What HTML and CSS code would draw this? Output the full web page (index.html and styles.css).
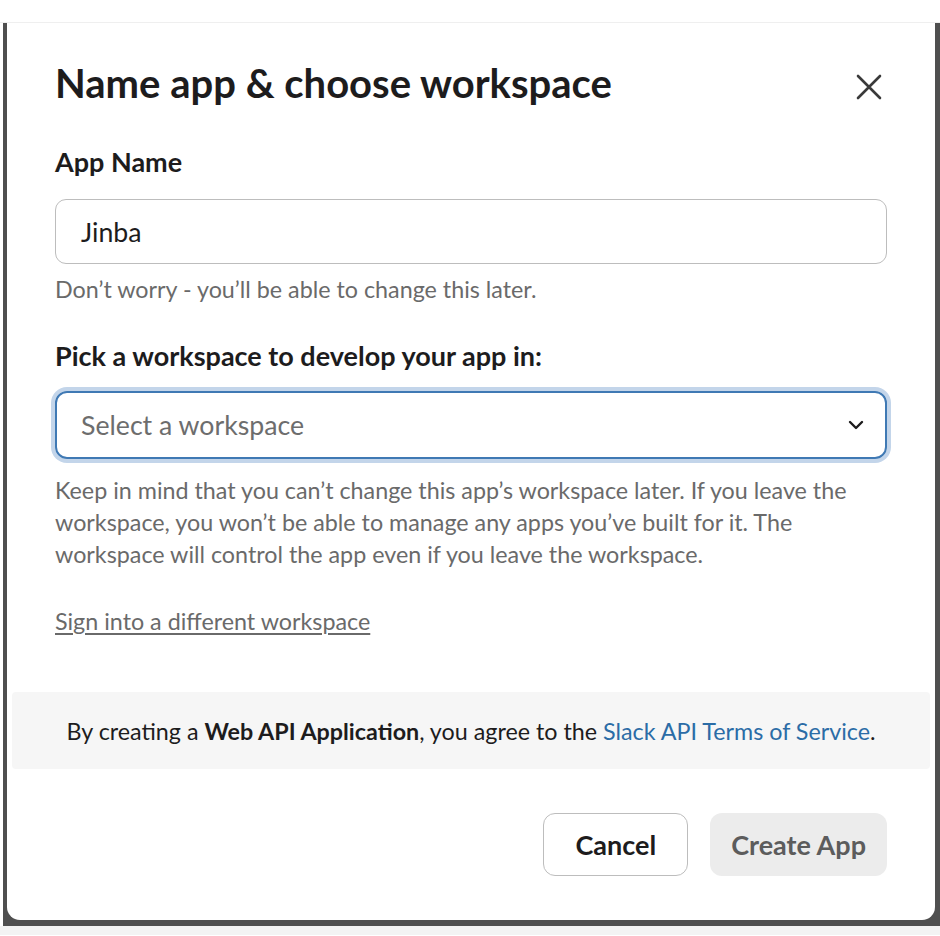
FILE: index.html
```html
<!DOCTYPE html>
<html lang="en">
<head>
<meta charset="utf-8">
<title>Name app &amp; choose workspace</title>
<link rel="stylesheet" href="styles.css">
</head>
<body>
<div class="top-strip"></div>
<div class="backdrop">
  <div class="dialog">
    <div class="content">
      <div class="title-row">
        <h1 class="title">Name app &amp; choose workspace</h1>
        <button class="close" aria-label="Close">
          <svg width="26" height="26" viewBox="0 0 26 26"><path d="M2 2 L24 24 M24 2 L2 24" stroke="#3a3a3a" stroke-width="2.6" stroke-linecap="round" fill="none"/></svg>
        </button>
      </div>
      <label class="label label-first">App Name</label>
      <div class="input">Jinba</div>
      <p class="hint">Don’t worry - you’ll be able to change this later.</p>
      <label class="label label-second">Pick a workspace to develop your app in:</label>
      <div class="select">
        <span class="placeholder">Select a workspace</span>
        <svg class="chevron" width="16" height="10" viewBox="0 0 16 10"><path d="M2 2 L8 8 L14 2" stroke="#1d1c1d" stroke-width="2.4" stroke-linecap="round" stroke-linejoin="round" fill="none"/></svg>
      </div>
      <p class="note">Keep in mind that you can’t change this app’s workspace later. If you leave the workspace, you won’t be able to manage any apps you’ve built for it. The workspace will control the app even if you leave the workspace.</p>
      <a class="signin" href="#">Sign into a different workspace</a>
    </div>
    <div class="band">By creating a <strong>Web API Application</strong>, you agree to the <a class="terms" href="#">Slack API Terms of Service</a>.</div>
    <div class="actions">
      <button class="btn btn-cancel">Cancel</button>
      <button class="btn btn-create">Create App</button>
    </div>
  </div>
</div>
<div class="bottom-strip"></div>
</body>
</html>
```

FILE: styles.css
```css
* { box-sizing: border-box; }
html, body { margin: 0; padding: 0; }
body {
  width: 940px;
  height: 936px;
  overflow: hidden;
  background: #ffffff;
  font-family: Lato, "Noto Sans", sans-serif;
  color: #1d1c1d;
}
.top-strip {
  height: 23px;
  border-bottom: 1px solid #efefef;
}
.backdrop {
  margin-left: 3px;
  background: #4f4f4f;
  padding: 0 5px 6px 4px;
}
.dialog {
  background: #ffffff;
  height: 897px;
  border-radius: 0 0 13px 13px;
  display: flex;
  flex-direction: column;
}
.bottom-strip {
  height: 9px;
  background: #f3f3f3;
}
.content {
  padding: 36px 48px 0 48px;
  display: flex;
  flex-direction: column;
}
.title-row {
  display: flex;
  justify-content: space-between;
  align-items: flex-start;
}
.title {
  margin: 0;
  font-size: 40px;
  line-height: 48px;
  font-weight: 700;
  color: #1d1c1d;
  white-space: nowrap;
}
.close {
  border: 0;
  background: none;
  padding: 0;
  margin: 15px 5px 0 0;
  width: 26px;
  height: 26px;
  display: flex;
}
.label {
  font-size: 27px;
  line-height: 30px;
  font-weight: 700;
  color: #1d1c1d;
}
.label-first { margin-top: 40px; }
.label-second { margin-top: 39px; }
.input {
  margin-top: 22px;
  height: 65px;
  border: 1.5px solid #bdbdbd;
  border-radius: 11px;
  padding: 0 25px;
  display: flex;
  align-items: center;
  font-size: 26.7px;
  color: #1d1c1d;
}
.hint {
  margin: 12px 0 0 0;
  font-size: 23.3px;
  line-height: 26px;
  color: #6a6a6a;
  white-space: nowrap;
}
.select {
  margin-top: 20px;
  height: 68px;
  border: 2px solid #3f79b4;
  border-radius: 12px;
  box-shadow: 0 0 0 4px #c3d5ea;
  padding: 0 21px 0 24px;
  display: flex;
  align-items: center;
  justify-content: space-between;
}
.placeholder {
  font-size: 26.7px;
  color: #6d6d6d;
}
.note {
  margin: 15px 0 0 0;
  font-size: 23.3px;
  line-height: 32px;
  color: #6a6a6a;
}
.signin {
  margin-top: 35px;
  font-size: 23.3px;
  line-height: 32px;
  color: #6a6a6a;
  text-decoration: underline;
  text-underline-offset: 3px;
  align-self: flex-start;
}
.band {
  margin: 55px 5px 0 5px;
  height: 77px;
  background: #f6f6f6;
  border-radius: 4px;
  display: flex;
  align-items: center;
  justify-content: center;
  font-size: 23.3px;
  color: #1d1c1d;
  white-space: pre;
}
.band strong { font-weight: 700; }
.terms {
  color: #2b6ca6;
  text-decoration: none;
}
.actions {
  margin-top: 44px;
  padding: 0 48px;
  display: flex;
  justify-content: flex-end;
  gap: 22px;
}
.btn {
  height: 63px;
  border-radius: 12px;
  font-family: Lato, "Noto Sans", sans-serif;
  font-size: 27px;
  font-weight: 700;
  padding: 0 31px;
}
.btn-cancel {
  background: #ffffff;
  border: 1.5px solid #bdbdbd;
  color: #1d1c1d;
}
.btn-create {
  background: #ececec;
  border: 0;
  color: #5c5c5c;
  padding: 0 21px;
}
```
